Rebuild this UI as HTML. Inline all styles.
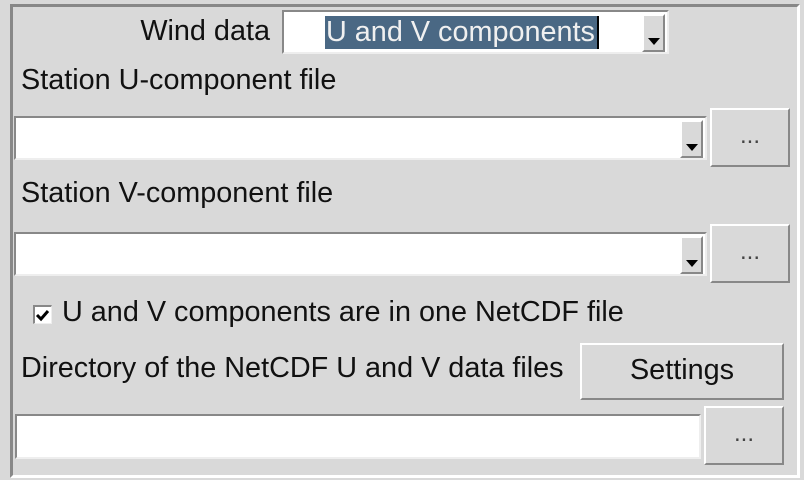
<!DOCTYPE html>
<html><head><style>
*{margin:0;padding:0;box-sizing:border-box}
body{width:804px;height:480px;background:#d9d9d9;position:relative;overflow:hidden;font-family:"Liberation Sans",sans-serif;color:#111;font-size:28.8px}
.a{position:absolute}
.t{position:absolute;white-space:nowrap;line-height:32px}
.frame{left:10px;top:4px;width:790px;height:474px;border-left:3px solid #888;border-top:3px solid #888;border-right:3px solid #fff;border-bottom:3px solid #fff}
.combo{position:absolute;background:#fff;border-top:2px solid #888;border-left:2px solid #888;border-right:2px solid #eee;border-bottom:2px solid #eee}
.arr{position:absolute;top:2px;right:2px;bottom:0;width:23px;background:#d9d9d9;border-left:2px solid #fff;border-top:2px solid #fff;border-right:2px solid #888;border-bottom:2px solid #888}
.arr:after{content:"";position:absolute;left:4px;bottom:5px;border-left:6px solid transparent;border-right:6px solid transparent;border-top:7px solid #000}
.btn{position:absolute;background:#d9d9d9;border-top:2px solid #fff;border-left:2px solid #fff;border-right:2px solid #888;border-bottom:2px solid #888;text-align:center}
.dots{font-size:24px;color:#444}
.entry{position:absolute;background:#fff;border-top:2px solid #888;border-left:2px solid #888;border-right:2px solid #eee;border-bottom:2px solid #eee}
</style></head><body>
<div class="a frame"></div>
<div class="t" style="right:534px;top:15px;text-align:right">Wind data</div>
<div class="combo" style="left:282px;top:10px;width:387px;height:44px">
<div class="a" style="left:41px;top:4px;width:274px;height:33px;background:#4a6884;border-right:2px solid #000;color:#f0f0f0;line-height:33px;padding-left:1px;font-size:28.8px;overflow:hidden">U and V components</div>
<div class="arr"></div></div>
<div class="t" style="left:21px;top:64px">Station U-component file</div>
<div class="combo" style="left:14px;top:116px;width:693px;height:44px"><div class="arr"></div></div>
<div class="btn dots" style="left:710px;top:108px;width:80px;height:59px;line-height:52px">...</div>
<div class="t" style="left:21px;top:177px">Station V-component file</div>
<div class="combo" style="left:14px;top:232px;width:693px;height:44px"><div class="arr"></div></div>
<div class="btn dots" style="left:710px;top:224px;width:80px;height:59px;line-height:52px">...</div>
<div class="a" style="left:33px;top:305px;width:19px;height:19px;background:#fff;border-top:2px solid #888;border-left:2px solid #888;border-right:1px solid #eee;border-bottom:1px solid #eee"><svg width="16" height="16" style="position:absolute;left:0;top:0"><path d="M2 8 L6 12 L13 4" stroke="#000" stroke-width="3" fill="none"/></svg></div>
<div class="t" style="left:62px;top:296px">U and V components are in one NetCDF file</div>
<div class="t" style="left:21px;top:352px">Directory of the NetCDF U and V data files</div>
<div class="btn" style="left:580px;top:343px;width:204px;height:57px;line-height:51px">Settings</div>
<div class="entry" style="left:15px;top:414px;width:686px;height:45px"></div>
<div class="btn dots" style="left:704px;top:406px;width:80px;height:59px;line-height:52px">...</div>
</body></html>
